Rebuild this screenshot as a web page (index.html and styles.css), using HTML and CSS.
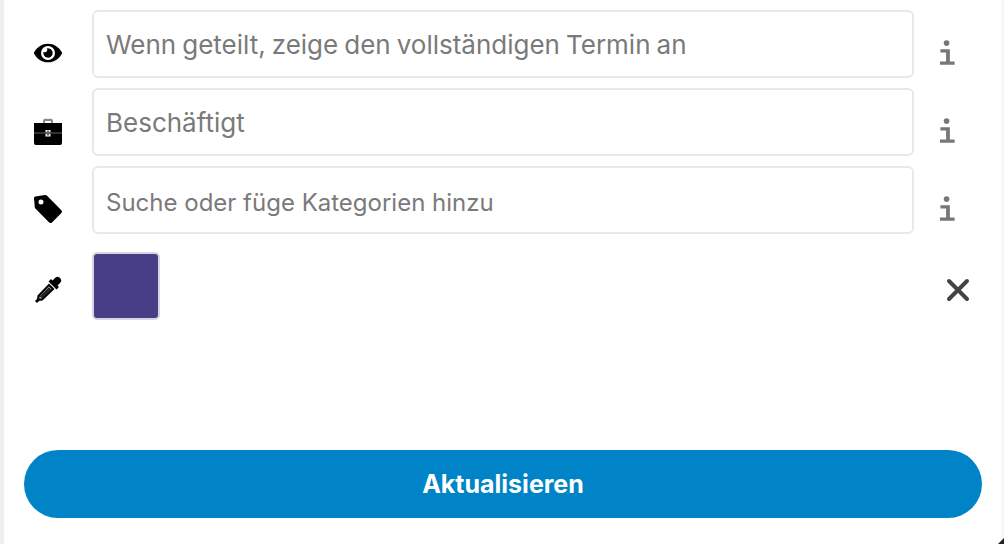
FILE: index.html
```html
<!DOCTYPE html>
<html lang="de">
<head>
<meta charset="utf-8">
<title>Termin</title>
<link rel="stylesheet" href="styles.css">
</head>
<body>
<main class="panel">
  <form class="rows">
    <div class="row">
      <span class="icon"><svg class="ic-eye" viewBox="0 0 576 512"><path d="M572.52 241.4C518.29 135.59 410.93 64 288 64S57.68 135.64 3.48 241.41a32.35 32.35 0 0 0 0 29.19C57.71 376.41 165.07 448 288 448s230.32-71.64 284.52-177.41a32.35 32.35 0 0 0 0-29.19zM288 400a144 144 0 1 1 144-144 143.93 143.93 0 0 1-144 144zm0-240a95.31 95.31 0 0 0-25.31 3.79 47.85 47.85 0 0 1-66.9 66.9A95.78 95.78 0 1 0 288 160z"/></svg></span>
      <input class="field" type="text" placeholder="Wenn geteilt, zeige den vollständigen Termin an">
      <span class="action"><svg class="ic-info" viewBox="0 0 18 28"><circle cx="8" cy="3.5" r="3"/><path d="M1.5 10h10v13h5v3.5H1V23h6.5v-9.500h-6z"/></svg></span>
    </div>
    <div class="row">
      <span class="icon"><svg class="ic-case" viewBox="0 0 28 27"><path d="M9 5V2.500A2 2 0 0 1 11 .8h6a2 2 0 0 1 2 1.700V5h-2V3h-6v2z" fill="#888"/><rect y="14" width="28" height="2" fill="#666"/><path d="M0 5h28v9.500H16.500V12h-5v2.500H0z"/><path d="M0 15.500h11.500v3h5v-3H28V25a2 2 0 0 1-2 2H2a2 2 0 0 1-2-2z"/><rect x="12.800" y="12.500" width="2.400" height="5" fill="#666"/></svg></span>
      <input class="field" type="text" placeholder="Beschäftigt">
      <span class="action"><svg class="ic-info" viewBox="0 0 18 28"><circle cx="8" cy="3.5" r="3"/><path d="M1.5 10h10v13h5v3.5H1V23h6.5v-9.500h-6z"/></svg></span>
    </div>
    <div class="row">
      <span class="icon"><svg class="ic-tag" viewBox="0 0 30 30"><path fill-rule="evenodd" d="M2.500 2.600 12 1a2 2 0 0 1 1.800.6L28.400 16.200a2 2 0 0 1 0 2.800L19 28.400a2 2 0 0 1-2.800 0L2.400 14.600a2 2 0 0 1-.6-1.400L1 4.200a1.500 1.500 0 0 1 1.500-1.600zM8 5.500a2.500 2.500 0 1 0 0 5 2.500 2.500 0 0 0 0-5z"/></svg></span>
      <input class="field field-small" type="text" placeholder="Suche oder füge Kategorien hinzu">
      <span class="action"><svg class="ic-info" viewBox="0 0 18 28"><circle cx="8" cy="3.5" r="3"/><path d="M1.5 10h10v13h5v3.5H1V23h6.5v-9.500h-6z"/></svg></span>
    </div>
    <div class="row row-colour">
      <span class="icon icon-drop"><svg class="ic-drop" viewBox="0 0 28 28"><path fill-rule="evenodd" d="M14 8.500 19.500 14 7.500 25.500 4 26 2 28 0 26l2-2 .5-3.500zM14 11.500 4.800 21.300l-.3 2.200 2.200-.3 9.800-9.200z"/><path d="M4.500 21.500 14 12l2.500 2.500-9.500 9z" fill="#222"/><path d="M17.500 5.500 20 3a3.500 3.500 0 0 1 5 5l-2.500 2.500 1.500 1.500-2.500 2.500-8-8L16 4z"/></svg></span>
      <span class="swatch-cell"><span class="swatch"></span></span>
      <span class="action"><svg class="ic-close" viewBox="0 0 24 24"><path d="M3 3l18 18M21 3L3 21"/></svg></span>
    </div>
  </form>
  <button class="submit" type="button">Aktualisieren</button>
  <svg class="corner" viewBox="0 0 5 5"><path d="M5 0v5H0z"/></svg>
</main>
</body>
</html>
```
FILE: styles.css
```css
* { box-sizing: border-box; }
html, body { margin: 0; height: 100%; background: #fff; }
body { font-family: Inter, "Liberation Sans", sans-serif; overflow: hidden; }
.panel {
  position: relative;
  width: 1004px;
  height: 544px;
  padding: 10px 3px 0 0;
  border-left: 4px solid #efefef;
  border-right: 3px solid #f7f7f7;
}
.rows { display: flex; flex-direction: column; gap: 10px; }
.row {
  display: grid;
  grid-template-columns: 88px 822px 1fr;
  height: 68px;
}
.row-colour { margin-top: 8px; }
.icon, .action {
  display: flex;
  align-items: center;
  justify-content: center;
  padding-top: 18px;
}
.action { padding-right: 18px; }
.row-colour .icon { padding: 6px 0 0 2px; }
.row-colour .action { padding: 8px 0 0 4px; }
.field {
  width: 100%;
  height: 68px;
  padding: 0 12px;
  border: 2px solid #e8e8e8;
  border-radius: 6px;
  background: #fff;
  color: #333;
  font: 400 26px Inter, "Liberation Sans", sans-serif;
  word-spacing: -1.300px;
}
.field-small { font-size: 24px; padding-top: 4px; word-spacing: 0; }
.field::placeholder { color: #7a7a7a; opacity: 1; }
.swatch-cell { display: block; }
.swatch {
  display: block;
  width: 68px;
  height: 68px;
  border: 2px solid #d6d6e0;
  border-radius: 5px;
  background: #463e87;
}
.ic-eye { width: 28px; height: 26px; fill: #000; }
.ic-case { width: 28px; height: 27px; fill: #000; }
.ic-tag { width: 30px; height: 30px; fill: #000; }
.ic-drop { width: 28px; height: 28px; fill: #000; }
.ic-info { width: 17px; height: 28px; fill: #777; }
.ic-close { width: 24px; height: 24px; fill: none; stroke: #444; stroke-width: 4; stroke-linecap: round; }
.submit {
  display: block;
  width: 958px;
  height: 68px;
  margin: 130px 0 0 20px;
  border: 0;
  border-radius: 34px;
  background: #0084c7;
  color: #fff;
  font: 700 25px Inter, "Liberation Sans", sans-serif;
}
.corner { position: absolute; right: -3px; bottom: 0; width: 6px; height: 6px; fill: #222; }
```
